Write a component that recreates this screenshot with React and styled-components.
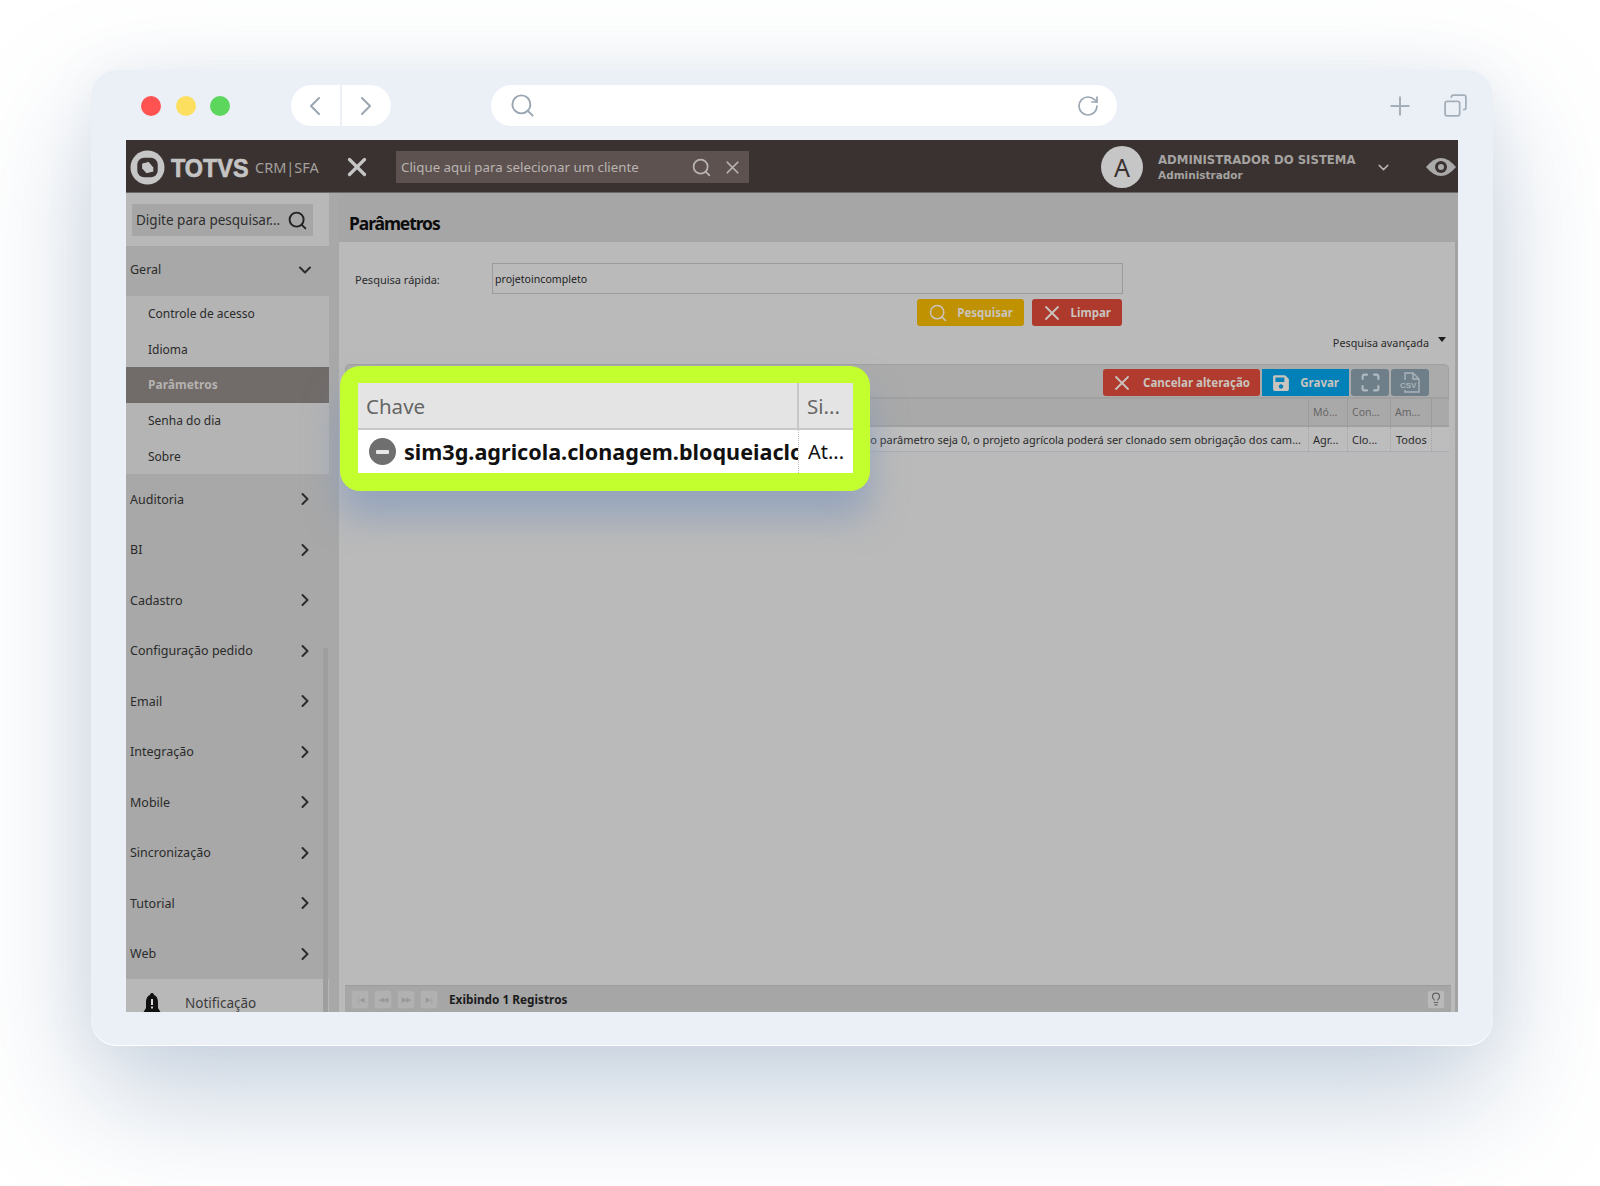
import React from 'react';
import styled, { createGlobalStyle } from 'styled-components';
import {
  ChevronDown,
  ChevronLeft,
  ChevronRight,
  Copy,
  Lightbulb,
  Maximize,
  Plus,
  RotateCw,
  Search,
  X,
} from 'lucide-react';
import { FaSave } from 'react-icons/fa';

const FONT = '"Noto Sans", "DejaVu Sans", sans-serif';

const GlobalStyle = createGlobalStyle`
  html, body {
    margin: 0;
    height: 100%;
    background: #fff;
    overflow: hidden;
  }
  * { box-sizing: border-box; }
`;

const Page = styled.div`
  width: 1600px;
  height: 1186px;
  padding: 70px 107px 0 91px;
  font-family: ${FONT};
`;

const Window = styled.div`
  width: 1402px;
  height: 976px;
  padding: 0 35px;
  background: #ebf0f7;
  border-radius: 26px;
  box-shadow: inset 0 -1px 0 #fff, 0 50px 120px rgba(100, 130, 165, 0.37), 0 0 50px rgba(105, 130, 165, 0.08);
`;

const Chrome = styled.div`
  height: 70px;
  padding: 15px 0 14px 15px;
  display: flex;
  align-items: center;
`;

const Light = styled.span`
  width: 20px;
  height: 20px;
  margin-right: 14.5px;
  border-radius: 50%;
  background: ${(p) => p.$color};
`;

const NavPill = styled.div`
  width: 100px;
  height: 41px;
  margin-left: 46px;
  display: flex;
  background: #fff;
  border-radius: 21px;
  color: #9aa6b2;
`;

const NavHalf = styled.div`
  flex: 1;
  display: flex;
  align-items: center;
  justify-content: center;
  & + & { border-left: 2px solid #ebf0f7; }
`;

const UrlBar = styled.div`
  width: 626px;
  height: 41px;
  margin-left: 100px;
  padding: 0 17px 0 18px;
  display: flex;
  align-items: center;
  justify-content: space-between;
  background: #fff;
  border-radius: 21px;
  color: #9aa6b2;
`;

const ChromeTools = styled.div`
  margin-left: auto;
  margin-right: -10px;
  display: flex;
  align-items: center;
  gap: 28px;
  color: #a4aeb9;
`;

const AppFrame = styled.div`
  position: relative;
  width: 1332px;
  height: 872px;
  overflow: hidden;
  display: flex;
  flex-direction: column;
  background: #bababa;
`;

const Header = styled.header`
  flex: none;
  height: 53px;
  padding-top: 2px;
  display: flex;
  align-items: center;
  background: #3a3230;
  border-bottom: 1px solid #6d6866;
  color: #b8b4b2;
`;

const Brand = styled.div`
  width: 216px;
  padding-left: 4px;
  display: flex;
  align-items: center;
`;

const BrandName = styled.span`
  display: inline-block;
  width: 75px;
  margin-left: 6px;
  padding-top: 2px;
  font-family: "Liberation Sans", sans-serif;
  font-weight: 700;
  font-size: 26px;
  line-height: 1;
  color: #c4c4c4;
  -webkit-text-stroke: 0.7px #c4c4c4;
  transform: scaleX(0.9);
  transform-origin: left center;
`;

const BrandTag = styled.span`
  margin-left: 9px;
  font-size: 14.5px;
  color: #a3a09e;
  white-space: nowrap;
`;

const ClientBox = styled.div`
  width: 353px;
  height: 32px;
  margin-left: 24px;
  padding: 0 6px 0 5px;
  display: flex;
  align-items: center;
  background: #5d5250;
  font-size: 13.3px;
  color: #b9b4b1;
`;

const ClientText = styled.span`
  flex: 1;
`;

const UserArea = styled.div`
  margin-left: auto;
  padding-right: 1px;
  display: flex;
  align-items: center;
`;

const Avatar = styled.div`
  width: 42px;
  height: 42px;
  display: flex;
  align-items: center;
  justify-content: center;
  border-radius: 50%;
  background: #c6c6c6;
  color: #3a3230;
  font-size: 25px;
`;

const UserText = styled.div`
  width: 217px;
  margin-left: 15px;
  display: flex;
  flex-direction: column;
  font-family: "DejaVu Sans", sans-serif;
  font-weight: 700;
  color: #a5a3a1;
`;

const UserName = styled.span`
  font-size: 11.7px;
  line-height: 16px;
`;

const UserRole = styled.span`
  font-size: 10.5px;
  line-height: 15px;
`;

const EyeWrap = styled.div`
  margin-left: 33px;
  display: flex;
`;

const Body = styled.div`
  flex: 1;
  min-height: 0;
  display: flex;
`;

const Sidebar = styled.aside`
  position: relative;
  flex: none;
  width: 203px;
  display: flex;
  flex-direction: column;
  background: #a8a8a8;
`;

const SearchArea = styled.div`
  flex: none;
  height: 53px;
  padding: 11px 16px 10px 6px;
  background: #b8b8b8;
`;

const SideSearch = styled.div`
  height: 32px;
  padding: 0 5px 0 4px;
  display: flex;
  align-items: center;
  justify-content: space-between;
  background: #a6a6a6;
  font-size: 13.5px;
  color: #2e2e2e;
`;

const MenuRow = styled.div`
  flex: none;
  height: ${(p) => p.$height || '50.5px'};
  padding: 0 14px ${(p) => p.$lift || 0}px 4px;
  display: flex;
  align-items: center;
  justify-content: space-between;
  font-size: 12.5px;
  color: #2b2b2b;
`;

const SubMenu = styled.div`
  flex: none;
  height: 178px;
  display: flex;
  flex-direction: column;
  background: #b4b4b4;
`;

const SubItem = styled.div`
  height: 35.6px;
  padding-left: 22px;
  display: flex;
  align-items: center;
  font-size: 12px;
  font-weight: ${(p) => (p.$active ? 700 : 400)};
  background: ${(p) => (p.$active ? '#716b69' : 'transparent')};
  color: ${(p) => (p.$active ? '#b5b2b0' : '#2b2b2b')};
`;

const NotifyRow = styled.div`
  flex: 1;
  padding: 14px 0 0 17px;
  display: flex;
  align-items: flex-start;
  background: #b8b8b8;
  font-size: 13.5px;
  color: #3c3c3c;
`;

const NotifyLabel = styled.span`
  margin-left: 24px;
  padding-top: 1px;
  line-height: 18px;
`;

const ScrollThumb = styled.div`
  position: absolute;
  top: 455px;
  right: 1px;
  bottom: 0;
  width: 5px;
  background: #9f9f9f;
`;

const Gutter = styled.div`
  flex: none;
  width: 10px;
  background: #a8a8a8;
`;

const Main = styled.main`
  flex: 1;
  min-width: 0;
  display: flex;
  flex-direction: column;
`;

const TitleBar = styled.div`
  flex: none;
  height: 49px;
  padding: 10px 0 0 10px;
  display: flex;
  align-items: center;
  background: #a6a6a6;
`;

const Title = styled.h1`
  margin: 0;
  font-size: 17.5px;
  font-weight: 700;
  letter-spacing: -1.1px;
  color: #0c0c0c;
`;

const Content = styled.div`
  flex: 1;
  min-height: 0;
  padding: 21px 4px 0 6px;
  display: flex;
  flex-direction: column;
  border-right: 3px solid #a3a3a3;
`;

const QuickRow = styled.div`
  padding-left: 10px;
  display: flex;
  align-items: center;
  font-size: 11px;
  color: #2b2b2b;
`;

const QuickLabel = styled.label`
  width: 137px;
  padding-top: 1px;
`;

const QuickInput = styled.div`
  width: 631px;
  height: 31px;
  padding: 0 2px;
  display: flex;
  align-items: center;
  border: 1px solid #9b9b9b;
  color: #1e1e1e;
  font-size: 10.6px;
`;

const ActionRow = styled.div`
  margin-top: 5px;
  padding-left: 572px;
  display: flex;
  gap: 8px;
`;

const Button = styled.div`
  width: ${(p) => p.$width}px;
  height: 27px;
  padding: 0 ${(p) => (p.$pad === undefined ? 11 : p.$pad)}px;
  display: flex;
  align-items: center;
  justify-content: ${(p) => (p.$center ? 'center' : 'space-between')};
  background: ${(p) => p.$bg};
  border-radius: ${(p) => (p.$radius === undefined ? 3 : p.$radius)}px;
  color: ${(p) => p.$fg || '#c9c4be'};
  font-size: 11.5px;
  font-weight: 700;
  white-space: nowrap;
`;

const Advanced = styled.div`
  height: 38px;
  padding: 0 5px 6px 0;
  display: flex;
  align-items: center;
  justify-content: flex-end;
  gap: 9px;
  font-size: 10.8px;
  color: #2b2b2b;
`;

const Caret = styled.span`
  margin-top: -5px;
  border-left: 4px solid transparent;
  border-right: 4px solid transparent;
  border-top: 5px solid #1c1c1c;
`;

const GridPanel = styled.section`
  flex: none;
  margin-right: 2px;
  display: flex;
  flex-direction: column;
`;

const GridToolbar = styled.div`
  height: 35px;
  padding: 0 19px 1px 0;
  display: flex;
  align-items: flex-end;
  justify-content: flex-end;
  gap: 2px;
  background: #ababab;
  border: 1px solid #a0a0a0;
  border-bottom: 2px solid #a0a0a0;
  border-radius: 5px 5px 0 0;
`;

const GridRow = styled.div`
  display: grid;
  grid-template-columns: 964px 39px 43px 41px 17px;
  height: ${(p) => p.$height}px;
  background: ${(p) => p.$bg};
  border-bottom: ${(p) => p.$line};
  font-size: ${(p) => p.$size}px;
  color: ${(p) => p.$fg};
`;

const GridCell = styled.div`
  min-width: 0;
  padding: 0 ${(p) => p.$pad || 4}px;
  display: flex;
  align-items: center;
  justify-content: ${(p) => (p.$end ? 'flex-end' : 'flex-start')};
  border-right: ${(p) => p.$line || 'none'};
  white-space: nowrap;
  overflow: hidden;
`;

const Footer = styled.div`
  flex: none;
  height: 27px;
  margin-top: auto;
  padding: 0 6px;
  display: flex;
  align-items: center;
  gap: 5px;
  background: #a6a6a6;
  border-top: 1px solid #9c9c9c;
`;

const PageButton = styled.div`
  width: 18px;
  height: 19px;
  display: flex;
  align-items: center;
  justify-content: center;
  background: #b1b1b1;
  border: 1px solid #a9a9a9;
  border-radius: 3px;
  color: #999;
  font-size: 7px;
  letter-spacing: -1px;
`;

const FooterText = styled.span`
  margin-left: 6px;
  font-size: 11.8px;
  font-weight: 700;
  color: #1c1c1c;
`;

const HintButton = styled(PageButton)`
  margin-left: auto;
  color: #626262;
  background: #b9b9b9;
`;

const Highlight = styled.div`
  position: absolute;
  left: 214px;
  top: 226px;
  width: 530px;
  height: 125px;
  padding: 17px 17px 17px 18px;
  background: #c3ff2f;
  border-radius: 20px;
  box-shadow: 0 26px 34px rgba(125, 150, 190, 0.6);
`;

const ZoomGrid = styled.div`
  height: 90px;
  display: grid;
  grid-template-columns: 441px 1fr;
  grid-template-rows: 47px 43px;
`;

const ZoomHead = styled.div`
  padding: 0 0 0 8px;
  display: flex;
  align-items: center;
  background: #e4e4e4;
  border-bottom: 2px solid #c8c8c8;
  border-right: ${(p) => (p.$last ? 'none' : '2px solid #c8c8c8')};
  font-size: 20.5px;
  color: #666;
`;

const ZoomCell = styled.div`
  padding-left: ${(p) => (p.$last ? 9 : 11)}px;
  display: flex;
  align-items: center;
  overflow: hidden;
  background: #fff;
  border-right: ${(p) => (p.$last ? 'none' : '1px dotted #bbb')};
  font-size: ${(p) => (p.$last ? 20 : 21.6)}px;
  font-weight: ${(p) => (p.$last ? 400 : 700)};
  color: #111;
  white-space: nowrap;
`;

const MinusDot = styled.span`
  flex: none;
  width: 27px;
  height: 27px;
  margin-right: 8px;
  display: flex;
  align-items: center;
  justify-content: center;
  border-radius: 50%;
  background: #6f6f6f;
  &::after {
    content: '';
    width: 13px;
    height: 4px;
    border-radius: 1px;
    background: #e8e8e8;
  }
`;

const menuItems = [
  'Auditoria',
  'BI',
  'Cadastro',
  'Configuração pedido',
  'Email',
  'Integração',
  'Mobile',
  'Sincronização',
  'Tutorial',
  'Web',
];

const subItems = ['Controle de acesso', 'Idioma', 'Parâmetros', 'Senha do dia', 'Sobre'];

function TotvsLogo() {
  return (
    <svg width="35" height="35" viewBox="0 0 36 36">
      <circle cx="18" cy="18" r="17.5" fill="#c6c6c6" />
      <rect x="7.5" y="8" width="21" height="20" rx="7" fill="#3a3230" />
      <path d="M12.5 14 L19 12 L24 18 L24 23 L17.5 24.5 L12.5 19 Z" fill="#c6c6c6" />
      <path d="M12 13 L21 10.5 M15 25.5 L24.5 23" stroke="#3a3230" strokeWidth="2" />
    </svg>
  );
}

function EyeIcon() {
  return (
    <svg width="32" height="22" viewBox="0 0 32 22">
      <path d="M1 11 Q16 -7 31 11 Q16 29 1 11 Z" fill="#a9a9a9" />
      <circle cx="16" cy="11" r="6" fill="#3a3230" />
      <circle cx="16" cy="11" r="3" fill="#a9a9a9" />
    </svg>
  );
}

function BellIcon() {
  return (
    <svg width="18" height="26" viewBox="0 0 18 26">
      <path d="M9 0 C10.5 0 11 1 11 2 C14 3 15 6 15 10 L15 15 L18 20 L0 20 L3 15 L3 10 C3 6 4 3 7 2 C7 1 7.5 0 9 0 Z" fill="#111" />
      <rect x="8" y="6" width="2" height="6" fill="#d8d8d8" />
      <rect x="8" y="13.5" width="2" height="2" fill="#d8d8d8" />
    </svg>
  );
}

function CsvIcon() {
  return (
    <svg width="22" height="24" viewBox="0 0 22 24" fill="none" stroke="#aab4ba" strokeWidth="1.4">
      <path d="M6 9 V2 H14 L20 8 V21 H6 V19" />
      <path d="M14 2 V8 H20" />
      <text x="1" y="17" fontSize="8" fill="#aab4ba" stroke="none" fontFamily="Liberation Sans">
        CSV
      </text>
    </svg>
  );
}

export default function App() {
  return (
    <Page>
      <GlobalStyle />
      <Window>
        <Chrome>
          <Light $color="#ff5352" />
          <Light $color="#fddf60" />
          <Light $color="#5cd65c" />
          <NavPill>
            <NavHalf>
              <ChevronLeft size={32} strokeWidth={1.5} />
            </NavHalf>
            <NavHalf>
              <ChevronRight size={32} strokeWidth={1.5} />
            </NavHalf>
          </NavPill>
          <UrlBar>
            <Search size={27} strokeWidth={1.7} />
            <RotateCw size={24} strokeWidth={1.7} />
          </UrlBar>
          <ChromeTools>
            <Plus size={30} strokeWidth={1.6} />
            <Copy size={25} strokeWidth={1.7} style={{ transform: 'scaleX(-1)' }} />
          </ChromeTools>
        </Chrome>

        <AppFrame>
          <Header>
            <Brand>
              <TotvsLogo />
              <BrandName>TOTVS</BrandName>
              <BrandTag>CRM|SFA</BrandTag>
            </Brand>
            <X size={30} strokeWidth={2.6} color="#c6c6c6" />
            <ClientBox>
              <ClientText>Clique aqui para selecionar um cliente</ClientText>
              <Search size={21} strokeWidth={2} style={{ marginRight: 10 }} />
              <X size={21} strokeWidth={2} />
            </ClientBox>
            <UserArea>
              <Avatar>A</Avatar>
              <UserText>
                <UserName>ADMINISTRADOR DO SISTEMA</UserName>
                <UserRole>Administrador</UserRole>
              </UserText>
              <ChevronDown size={17} strokeWidth={2} />
              <EyeWrap>
                <EyeIcon />
              </EyeWrap>
            </UserArea>
          </Header>

          <Body>
            <Sidebar>
              <SearchArea>
                <SideSearch>
                  Digite para pesquisar...
                  <Search size={21} strokeWidth={2.2} color="#222" />
                </SideSearch>
              </SearchArea>
              <MenuRow $height="50px" $lift={3}>
                Geral
                <ChevronDown size={20} strokeWidth={2.4} />
              </MenuRow>
              <SubMenu>
                {subItems.map((item) => (
                  <SubItem key={item} $active={item === 'Parâmetros'}>
                    {item}
                  </SubItem>
                ))}
              </SubMenu>
              {menuItems.map((item) => (
                <MenuRow key={item}>
                  {item}
                  <ChevronRight size={20} strokeWidth={2.4} />
                </MenuRow>
              ))}
              <NotifyRow>
                <BellIcon />
                <NotifyLabel>Notificação</NotifyLabel>
              </NotifyRow>
              <ScrollThumb />
            </Sidebar>
            <Gutter />

            <Main>
              <TitleBar>
                <Title>Parâmetros</Title>
              </TitleBar>
              <Content>
                <QuickRow>
                  <QuickLabel>Pesquisa rápida:</QuickLabel>
                  <QuickInput>projetoincompleto</QuickInput>
                </QuickRow>
                <ActionRow>
                  <Button $width={107} $bg="#c09100">
                    <Search size={20} strokeWidth={1.8} />
                    Pesquisar
                  </Button>
                  <Button $width={90} $bg="#ae3a2e">
                    <X size={24} strokeWidth={1.8} style={{ marginLeft: -3 }} />
                    Limpar
                  </Button>
                </ActionRow>
                <Advanced>
                  Pesquisa avançada
                  <Caret />
                </Advanced>
                <GridPanel>
                  <GridToolbar>
                    <Button $width={157} $bg="#b03b2e" $pad={10}>
                      <X size={24} strokeWidth={1.8} style={{ marginLeft: -3 }} />
                      Cancelar alteração
                    </Button>
                    <Button $width={87} $bg="#0280b8" $radius={0} $pad={10}>
                      <FaSave size={18} />
                      Gravar
                    </Button>
                    <Button $width={38} $bg="#6f7f89" $center $pad={0} $fg="#b0bac0">
                      <Maximize size={21} strokeWidth={2.4} />
                    </Button>
                    <Button $width={38} $bg="#6f7f89" $center $pad={0}>
                      <CsvIcon />
                    </Button>
                  </GridToolbar>
                  <GridRow $height={28} $size={10.5} $bg="#a9a9a9" $line="2px solid #a0a0a0" $fg="#666">
                    <GridCell $line="1px solid #9c9c9c" />
                    <GridCell $line="1px solid #9c9c9c">Mó...</GridCell>
                    <GridCell $line="1px solid #9c9c9c">Con...</GridCell>
                    <GridCell $line="1px solid #9c9c9c">Am...</GridCell>
                    <GridCell />
                  </GridRow>
                  <GridRow $height={25} $size={11} $bg="#bdbdbd" $line="1px solid #a7adb3" $fg="#2b2b2b">
                    <GridCell $line="1px dotted #a4a4a4" $end $pad={7}>
                      do parâmetro seja 0, o projeto agrícola poderá ser clonado sem obrigação dos cam...
                    </GridCell>
                    <GridCell $line="1px dotted #a4a4a4">Agr...</GridCell>
                    <GridCell $line="1px dotted #a4a4a4">Clo...</GridCell>
                    <GridCell $line="1px dotted #a4a4a4" $pad={5}>Todos</GridCell>
                    <GridCell />
                  </GridRow>
                </GridPanel>
                <Footer>
                  <PageButton>|◀</PageButton>
                  <PageButton>◀◀</PageButton>
                  <PageButton>▶▶</PageButton>
                  <PageButton>▶|</PageButton>
                  <FooterText>Exibindo 1 Registros</FooterText>
                  <HintButton>
                    <Lightbulb size={14} strokeWidth={2} />
                  </HintButton>
                </Footer>
              </Content>
            </Main>
          </Body>

          <Highlight>
            <ZoomGrid>
              <ZoomHead>Chave</ZoomHead>
              <ZoomHead $last>Si...</ZoomHead>
              <ZoomCell>
                <MinusDot />
                sim3g.agricola.clonagem.bloqueiaclo
              </ZoomCell>
              <ZoomCell $last>At...</ZoomCell>
            </ZoomGrid>
          </Highlight>
        </AppFrame>
      </Window>
    </Page>
  );
}
